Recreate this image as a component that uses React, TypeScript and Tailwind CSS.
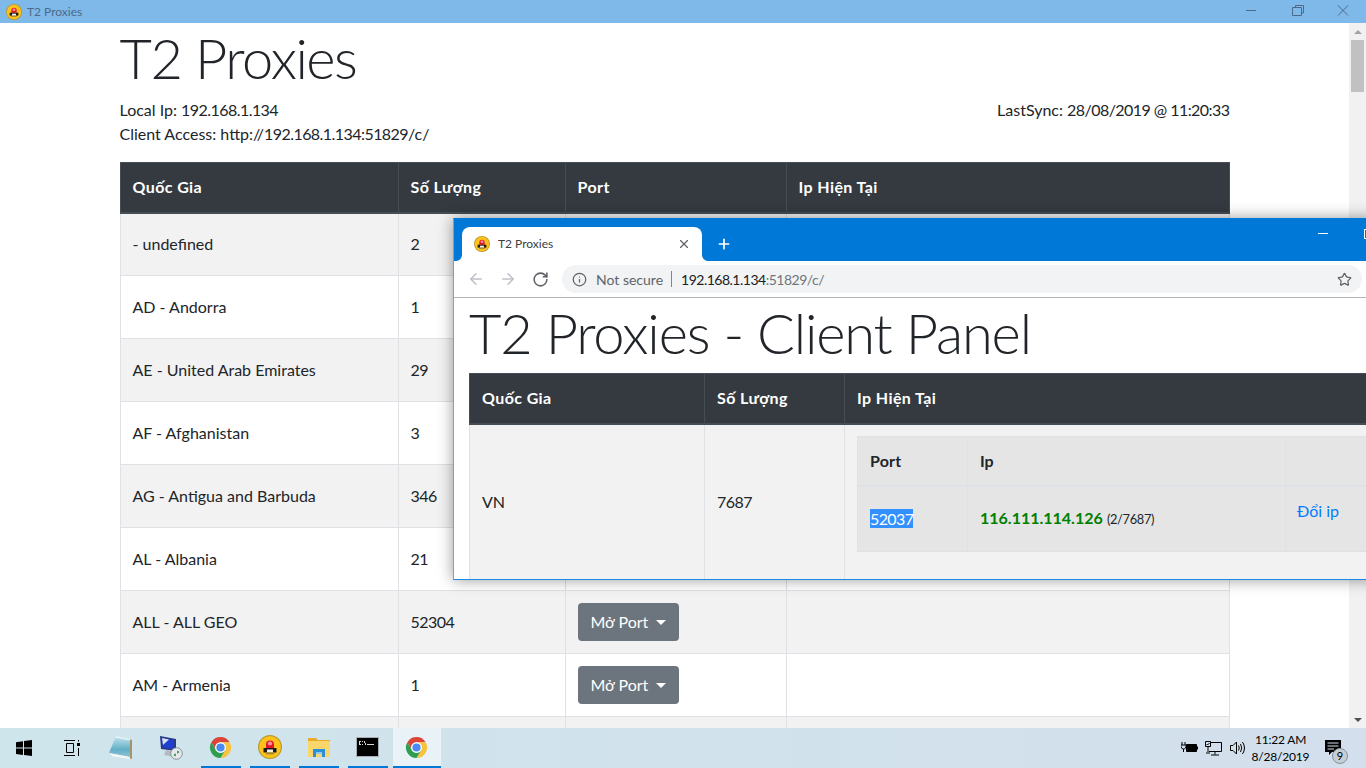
import React from "react";
import { ArrowLeft, ArrowRight, RotateCw, Info, Star, Plus, X } from "lucide-react";

const ui = "font-['Lato','Open_Sans',sans-serif]";

function N({ children }: { children: React.ReactNode }) {
  return <span className="tracking-[-0.55px]">{children}</span>;
}

function T2Icon({ size = 16 }: { size?: number }) {
  return (
    <svg width={size} height={size} viewBox="0 0 24 24" className="shrink-0">
      <circle cx="12" cy="12" r="12" fill="#b89a2e" />
      <circle cx="12" cy="12" r="10.800" fill="#fdc31a" />
      <path d="M8 13V9.500a4 4 0 0 1 8 0V13z" fill="#e3142a" />
      <ellipse cx="12" cy="8.500" rx="2.200" ry="1.900" fill="#ff8f9c" />
      <path d="M5.500 13H18.500V17.500H5.500z" fill="#1d1a1c" />
      <path d="M9 14.500H15V17.500H9z" fill="#f3efe6" />
      <path d="M7 17.500H17L15.500 19.500H8.500z" fill="#a98b2c" />
    </svg>
  );
}

function ChromeIcon() {
  return (
    <svg width="23" height="23" viewBox="0 0 24 24">
      <path d="M2.470 6.500A11 11 0 0 1 21.530 6.500H12A5.500 5.500 0 0 0 7.240 14.750Z" fill="#db4437" />
      <path d="M21.530 6.500A11 11 0 0 1 12 23L16.760 14.750A5.500 5.500 0 0 0 12 6.500Z" fill="#f6c33b" />
      <path d="M12 23A11 11 0 0 1 2.470 6.500L7.240 14.750A5.500 5.500 0 0 0 16.760 14.750Z" fill="#2f9e4f" />
      <circle cx="12" cy="12" r="5.500" fill="#fff" />
      <circle cx="12" cy="12" r="4.300" fill="#4a8af4" />
    </svg>
  );
}

function WinIcon() {
  return (
    <svg width="16" height="16" viewBox="0 0 16 16" fill="#000">
      <path d="M0 2.200 7 1.200V7.600H0zM8 1 16 0V7.600H8zM0 8.500H7V14.900L0 13.900zM8 8.500H16V16L8 15z" />
    </svg>
  );
}

function TaskViewIcon() {
  return (
    <svg width="16" height="16" viewBox="0 0 16 16" fill="none" stroke="#000" strokeWidth="1">
      <path d="M0 .5H11M0 15.500H11M2.500 3.500H9.500V12.500H2.500z" />
      <path d="M13 3h3v3h-3z" fill="#000" stroke="none" />
      <path d="M14.500 8v8M14.500 0v1.500" />
    </svg>
  );
}

function NotepadIcon() {
  return (
    <svg width="24" height="24" viewBox="0 0 24 24">
      <defs>
        <linearGradient id="pad" x1="0" y1="0" x2="0" y2="1">
          <stop offset="0" stopColor="#c3e6ee" />
          <stop offset="0.650" stopColor="#63aec6" />
          <stop offset="1" stopColor="#8fc6d6" />
        </linearGradient>
      </defs>
      <path d="M20 3 23 4 23 23 19 22z" fill="#a8926a" />
      <path d="M7 0 21 3 21 21 0 17z" fill="url(#pad)" />
      <path d="M0 17 21 21 21 23 4 20.500z" fill="#f2f6f7" />
      <path d="M7 0 21 3 20.500 4.500 6 1.500z" fill="#e4f3f6" />
    </svg>
  );
}

function NetworkIcon() {
  return (
    <svg width="24" height="24" viewBox="0 0 24 24">
      <path d="M1 0 17 3V15L2 13z" fill="#2b3a86" />
      <path d="M3 2 15 4.500V13L4 11.500z" fill="#1f3fd0" />
      <path d="M3 2 10 3.500 4 9z" fill="#d7e0f6" />
      <path d="M7 14 13 15 14 18 16 21 5 19z" fill="#b4babf" />
      <circle cx="17.500" cy="17.500" r="5.800" fill="#e6e9ea" stroke="#7a7f83" strokeWidth=".8" />
      <path d="M14.500 19l2.200-1.800v3.400zM20.500 16l-2.200 1.800v-3.400z" fill="#138a2b" />
    </svg>
  );
}

function FolderIcon() {
  return (
    <svg width="22" height="20" viewBox="0 0 22 20">
      <path d="M0 1H8L10 3H22V20H0z" fill="#e6ad28" />
      <path d="M0 4H22V20H0z" fill="#fbd66c" />
      <path d="M5 12H17V20H14V15H8V20H5z" fill="#2a8fd8" />
      <path d="M8 15H14V17H8z" fill="#8ccaf2" />
    </svg>
  );
}

function CmdIcon() {
  return (
    <svg width="23" height="20" viewBox="0 0 23 20">
      <path d="M0 0H23V20H0z" fill="#a7adb2" />
      <path d="M1 1H22V19H1z" fill="#000" />
      <path d="M3 4H5V5H4V7H5V8H3zM6 4H7V5H6zM6 7H7V8H6zM8 4H9V6H10V8H9V6H8zM11 7H18V8H11z" fill="#d8d8d8" />
    </svg>
  );
}

function TrayBattery() {
  return (
    <svg width="17" height="12" viewBox="0 0 17 12">
      <path d="M5.500 2.500h10v7h-10z" fill="#000" stroke="#000" />
      <path d="M16 4.500h1v3h-1z" fill="#000" />
      <path d="M0 3h5v2L3.500 7H1.500L0 5zM2.500 7v3" fill="none" stroke="#000" />
      <path d="M1 0v3M4 0v3" stroke="#000" />
    </svg>
  );
}

function TrayNet() {
  return (
    <svg width="17" height="15" viewBox="0 0 17 15" fill="none" stroke="#000">
      <path d="M4 1.500H16.500V10.500H4M10 10.500V13.500M6 14H14" />
      <path d="M.5.500H5.500V5.500H.5zM3 5.500V11M1 12H5" fill="#d3dfec" />
      <path d="M1.500 3l1 1 2-2" />
    </svg>
  );
}

function TraySpeaker() {
  return (
    <svg width="16" height="14" viewBox="0 0 16 14" fill="none" stroke="#000">
      <path d="M.5 4.500H3L6.500 1V13L3 9.500H.5z" />
      <path d="M8.500 4.500q1.500 2.500 0 5M10.500 3q2.500 4 0 8M12.500 1q4 6 0 12" />
    </svg>
  );
}

function NotifIcon() {
  return (
    <div className="relative w-[24px] h-[24px] mt-[8px]">
      <svg width="16" height="15" viewBox="0 0 16 15">
        <path d="M0 0H16V12H7L4 15V12H0z" fill="#000" />
        <path d="M2.500 3H13.500M2.500 6H13.500M2.500 9H9" stroke="#d3dfec" />
      </svg>
      <div className="absolute left-[7px] top-[8px] w-[16px] h-[16px] rounded-full bg-[#c5cfd8] border border-[#8b8f94] text-[11px] leading-[14px] text-center text-black">9</div>
    </div>
  );
}

const rows: [string, string][] = [
  ["- undefined", "2"],
  ["AD - Andorra", "1"],
  ["AE - United Arab Emirates", "29"],
  ["AF - Afghanistan", "3"],
  ["AG - Antigua and Barbuda", "346"],
  ["AL - Albania", "21"],
  ["ALL - ALL GEO", "52304"],
  ["AM - Armenia", "1"],
  ["AO - Angola", "12"],
];

const th = "border border-[#454d55] border-b-2 px-3 text-left font-bold tracking-[0.4px]";

function PageTable() {
  return (
    <table className="w-[1109px] table-fixed border-collapse text-[16px] leading-[24px] text-[#212529]">
      <colgroup>
        <col className="w-[278px]" />
        <col className="w-[167px]" />
        <col className="w-[221px]" />
        <col className="w-[443px]" />
      </colgroup>
      <thead>
        <tr className="bg-[#343a40] text-white h-[50px]">
          <th className={th}>Quốc Gia</th>
          <th className={th}>Số Lượng</th>
          <th className={th}>Port</th>
          <th className={th}>Ip Hiện Tại</th>
        </tr>
      </thead>
      <tbody>
        {rows.map(([name, count], i) => (
          <tr key={name} className={i % 2 === 0 ? "bg-[#f2f2f2]" : "bg-white"}>
            <td className="border border-[#dee2e6] px-3 h-[63px]">{name}</td>
            <td className="border border-[#dee2e6] px-3"><N>{count}</N></td>
            <td className="border border-[#dee2e6] px-3">
              <button className="inline-flex items-center h-[38px] w-[101px] pl-[13px] rounded bg-[#6c757d] text-white">
                Mở Port
                <span className="ml-2 w-0 h-0 border-x-[5px] border-x-transparent border-t-[5px] border-t-white" />
              </button>
            </td>
            <td className="border border-[#dee2e6] px-3" />
          </tr>
        ))}
      </tbody>
    </table>
  );
}

function Scrollbar() {
  return (
    <div className="w-[17px] shrink-0 bg-[#f1f1f1] flex flex-col items-center">
      <div className="h-[17px] flex items-center justify-center shrink-0">
        <span className="w-0 h-0 border-x-[4px] border-x-transparent border-b-[4px] border-b-[#a3a3a3]" />
      </div>
      <div className="w-[13px] h-[52px] bg-[#c1c1c1] shrink-0" />
      <div className="flex-1" />
      <div className="h-[17px] flex items-center justify-center shrink-0">
        <span className="w-0 h-0 border-x-[4px] border-x-transparent border-t-[4px] border-t-[#505050]" />
      </div>
    </div>
  );
}

function BrowserWindow() {
  return (
    <div className="absolute left-[453px] top-[218px] w-[985px] h-[362px] bg-white border border-[#9a9a9a] border-b-[#1e88e5] border-t-[#0078d7] shadow-[0_0_14px_rgba(0,0,0,0.4)] overflow-hidden flex flex-col">
      <div className="h-[42px] bg-[#0078d7] flex items-end pl-2 relative shrink-0">
        <div className="relative w-[240px] h-[34px] bg-white rounded-t-lg flex items-center pl-3 pr-[11px]">
          <svg className="absolute -left-[6px] bottom-0" width="6" height="6" viewBox="0 0 6 6"><path d="M6 0V6H0A6 6 0 0 0 6 0z" fill="#fff" /></svg>
          <svg className="absolute -right-[6px] bottom-0" width="6" height="6" viewBox="0 0 6 6"><path d="M0 0V6H6A6 6 0 0 1 0 0z" fill="#fff" /></svg>
          <T2Icon size={16} />
          <span className="ml-2 text-[12px] text-[#3c4043]">T2 Proxies</span>
          <X className="ml-auto text-[#5f6368]" size={14} strokeWidth={2} />
        </div>
        <Plus className="ml-[14px] mb-[9px] text-white" size={16} strokeWidth={2.500} />
        <div className="absolute left-[864px] top-[14px] w-[10px] h-px bg-white" />
        <div className="absolute left-[910px] top-[10px] w-[10px] h-[10px] border border-white" />
      </div>
      <div className="h-[37px] shrink-0 border-b border-[#b4b4b4] flex items-center pl-[13px] gap-[14px]">
        <ArrowLeft size={18} className="text-[#bdc1c6]" strokeWidth={2} />
        <ArrowRight size={18} className="text-[#bdc1c6]" strokeWidth={2} />
        <RotateCw size={17} className="text-[#5f6368] ml-[1px]" strokeWidth={2.200} />
        <div className="-ml-[1px] w-[800px] h-[28px] rounded-full bg-[#f1f3f4] flex items-center pl-[10px] pr-[10px]">
          <Info size={15} className="text-[#5f6368]" strokeWidth={2} />
          <span className="ml-[9px] text-[#5f6368] text-[14px]">Not secure</span>
          <span className="ml-[8px] w-px h-[16px] bg-[#80868b]" />
          <span className="ml-[9px] text-[#202124] text-[14px] tracking-[-0.5px]">192.168.1.134<span className="text-[#70757a]">:51829/c/</span></span>
          <Star size={15} className="ml-auto text-[#5f6368]" strokeWidth={2} />
        </div>
      </div>
      <div className="px-[15px]">
        <h1 className="text-[56px] leading-[69px] font-light tracking-[-1.150px] text-[#212529] mb-[6px] whitespace-nowrap">T2 Proxies - Client Panel</h1>
        <table className="w-[1100px] table-fixed border-collapse text-[16px] leading-[24px] text-[#212529]">
          <colgroup>
            <col className="w-[235px]" />
            <col className="w-[140px]" />
            <col />
          </colgroup>
          <thead>
            <tr className="bg-[#343a40] text-white h-[50px]">
              <th className={th}>Quốc Gia</th>
              <th className={th}>Số Lượng</th>
              <th className={th}>Ip Hiện Tại</th>
            </tr>
          </thead>
          <tbody>
            <tr className="bg-[#f2f2f2]">
              <td className="border border-[#dee2e6] px-3">VN</td>
              <td className="border border-[#dee2e6] px-3"><N>7687</N></td>
              <td className="border border-[#dee2e6] pl-3 pr-3 pt-[11px] pb-[28px]">
                <table className="w-[700px] table-fixed border-collapse bg-[#e5e5e5]">
                  <colgroup>
                    <col className="w-[110px]" />
                    <col className="w-[318px]" />
                    <col />
                  </colgroup>
                  <thead>
                    <tr className="h-[50px]">
                      <th className="border border-[#dee2e6] border-b-2 px-3 text-left font-bold tracking-[0.2px]">Port</th>
                      <th className="border border-[#dee2e6] border-b-2 px-3 text-left font-bold">Ip</th>
                      <th className="border border-[#dee2e6] border-b-2 px-3" />
                    </tr>
                  </thead>
                  <tbody>
                    <tr className="h-[65px]">
                      <td className="border border-[#dee2e6] px-3">
                        <span className="bg-[#3390ff] text-white tracking-[-0.6px]">52037</span>
                      </td>
                      <td className="border border-[#dee2e6] px-3 whitespace-nowrap">
                        <span className="font-bold text-[#008000]">116.111.114.126</span>{" "}
                        <span className="text-[12.800px] tracking-[-0.3px]">(2/7687)</span>
                      </td>
                      <td className="border border-[#dee2e6] pl-[11px] pt-3 align-top text-[#007bff]">Đổi ip</td>
                    </tr>
                  </tbody>
                </table>
              </td>
            </tr>
          </tbody>
        </table>
      </div>
    </div>
  );
}

function TaskButton({ children, active }: { children: React.ReactNode; active?: boolean }) {
  return (
    <div className={"h-full flex flex-col items-center relative " + (active ? "w-[48px] bg-[#e8f2f7]" : "w-[49px]")}>
      <div className="flex-1 flex items-center justify-center pb-[2px] pr-[2px]">{children}</div>
      <div className={"absolute bottom-0 h-[2px] bg-[#0078d7] " + (active ? "inset-x-0" : "left-[4px] right-[5px]")} />
    </div>
  );
}

function Taskbar() {
  return (
    <div className="h-[40px] shrink-0 bg-gradient-to-r from-[#cfe5ec] to-[#d3dfec] flex items-center text-black">
      <div className="w-[48px] flex justify-center"><WinIcon /></div>
      <div className="w-[48px] flex justify-center"><TaskViewIcon /></div>
      <div className="w-[49px] flex justify-center"><NotepadIcon /></div>
      <div className="w-[52px] flex justify-center"><NetworkIcon /></div>
      <div className="h-full flex">
        <TaskButton><ChromeIcon /></TaskButton>
        <TaskButton><T2Icon size={24} /></TaskButton>
        <TaskButton><FolderIcon /></TaskButton>
        <TaskButton><CmdIcon /></TaskButton>
        <TaskButton active><ChromeIcon /></TaskButton>
      </div>
      <div className="ml-auto flex items-center h-full pr-[17px]">
        <TrayBattery />
        <div className="w-[7px]" />
        <TrayNet />
        <div className="w-[8px]" />
        <TraySpeaker />
        <div className="w-[70px] text-center text-[12px] leading-[17px] -ml-[0.500px] tracking-[-0.2px]">
          <div>11:22 AM</div>
          <div>8/28/2019</div>
        </div>
        <div className="ml-[9.500px]"><NotifIcon /></div>
      </div>
    </div>
  );
}

export default function App() {
  return (
    <div className={"relative h-screen w-full overflow-hidden flex flex-col bg-white " + ui}>
      <div className="h-[23px] shrink-0 bg-[#7eb9ea] flex items-center pl-[6px] text-[#4d6a87]">
        <T2Icon size={16} />
        <span className="ml-[5px] text-[12px]">T2 Proxies</span>
        <svg className="ml-auto" width="120" height="23" viewBox="0 0 120 23" fill="none" stroke="#4d6a87">
          <path d="M0 10.500H10" />
          <path d="M46.500 7.500H55.500V15.500H46.500zM49.500 7.500V5.500H57.500V13H55.500" />
          <path d="M92 5.500 102 15.500M102 5.500 92 15.500" />
        </svg>
      </div>
      <div className="flex-1 min-h-0 flex">
        <div className="flex-1 min-w-0 overflow-hidden">
          <div className="w-[1140px] mx-auto px-[15px]">
            <h1 className="text-[56px] leading-[69px] font-light tracking-[-1.500px] text-[#212529] mb-[6px]">T2 Proxies</h1>
            <div className="flex justify-between text-[16px] leading-[24px] text-[#212529]">
              <span>Local Ip: <N>192.168.1.134</N></span>
              <span>LastSync: <N>28/08/2019 @ 11:20:33</N></span>
            </div>
            <div className="text-[16px] leading-[24px] text-[#212529] mb-4">Client Access: http://<N>192.168.1.134:51829</N>/c/</div>
            <PageTable />
          </div>
        </div>
        <Scrollbar />
      </div>
      <Taskbar />
      <BrowserWindow />
    </div>
  );
}
